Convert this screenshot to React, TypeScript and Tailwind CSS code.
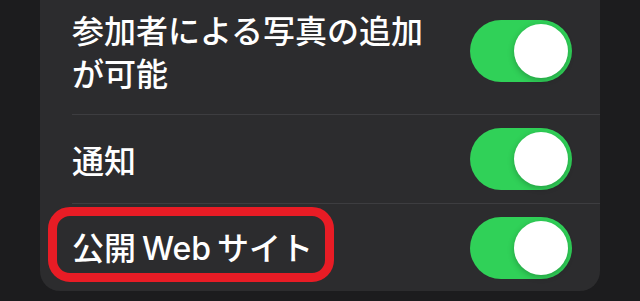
import React from "react";

const font = { fontFamily: '"Noto Sans CJK JP", "Noto Sans", sans-serif' };

function Toggle() {
  return (
    <div className="relative h-[62px] w-[102px] shrink-0 rounded-full bg-[#30d158]">
      <div className="absolute right-[4px] top-[4px] h-[54px] w-[54px] rounded-full bg-white shadow-[0_2px_6px_rgba(0,0,0,0.25)]" />
    </div>
  );
}

function Divider() {
  return <div className="ml-8 h-px bg-[#3d3d40]" />;
}

export default function App() {
  return (
    <div className="h-[301px] w-[640px] overflow-hidden bg-[#1c1c1e]" style={font}>
      <div className="mx-10 -mt-[12px] rounded-b-[20px] bg-[#2c2c2e]">
        {/* photo sharing */}
        <div className="flex items-center justify-between py-[20px] pl-8 pr-[28px]">
          <div className="text-[32px] font-medium leading-[43px] text-white">
            参加者による写真の追加
            <br />
            が可能
          </div>
          <Toggle />
        </div>
        <Divider />

        {/* notifications */}
        <div className="flex h-[88px] items-center justify-between pl-8 pr-[28px]">
          <div className="text-[32px] font-medium leading-[42px] text-white">通知</div>
          <Toggle />
        </div>
        <Divider />

        {/* public website */}
        <div className="flex h-[87px] items-center justify-between pl-8 pr-[28px]">
          <div className="relative flex items-baseline text-[32px] font-medium leading-[42px] text-white">
            <span>公開</span>
            <span className="ml-[6px] font-['Inter',sans-serif] font-medium">Web</span>
            <span className="ml-[6px]">サイト</span>
            <div className="absolute -left-[24px] -top-[18px] h-[75px] w-[286px] rounded-[22px] border-[9px] border-[#e81c25]" />
          </div>
          <Toggle />
        </div>
      </div>
    </div>
  );
}
